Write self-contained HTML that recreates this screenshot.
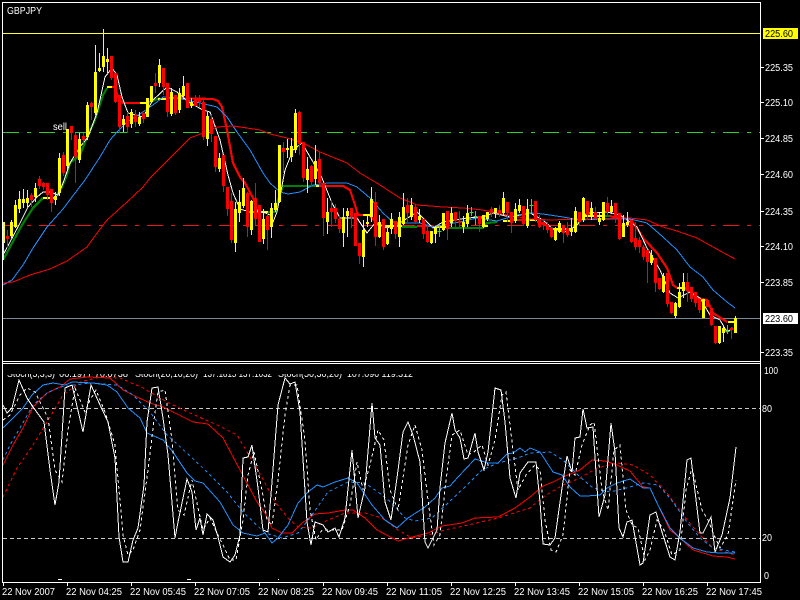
<!DOCTYPE html>
<html>
<head>
<meta charset="utf-8">
<title>GBPJPY</title>
<style>
html,body{margin:0;padding:0;background:#000;width:800px;height:600px;overflow:hidden}
svg{display:block}
text{font-family:"Liberation Sans",sans-serif;font-size:10px;fill:#fff}
.c{shape-rendering:crispEdges;fill:none}
</style>
</head>
<body>
<svg width="800" height="600" viewBox="0 0 800 600" xmlns="http://www.w3.org/2000/svg">
<defs><clipPath id="hd"><rect x="3" y="374" width="500" height="5"/></clipPath></defs>
<rect width="800" height="600" fill="#000"/>

<!-- horizontal levels -->
<path class="c" stroke="#ffff33" d="M3 33.5H760"/>
<path class="c" stroke="#32cd32" stroke-dasharray="16 8 4 8" d="M3 132.5H760"/>
<path class="c" stroke="#e81818" stroke-dasharray="16 8 4 8" d="M3 225.5H760"/>
<path class="c" stroke="#778899" d="M3 318.5H760"/>

<!-- thick MA -->
<g class="c" fill="none" stroke-width="2.2" stroke-linejoin="round">
<path stroke="#008000" d="M3 260L10 247L22 225L33 208L43 198M56 196L62 187L67 175L70 163L80 155L88 135L95 120L103 95L107 88M147 103L160 98M268 212H275L278 200L283 186H316M402 227H417M447 228H483L487 223L497 222M573 226L580 222M605 216H610"/>
<path stroke="#ff0" d="M43 198H55M107 87H112M140 103H148M158 99H166M257 210L260 212H268M316 186H320M363 215H370M385 226H402M433 227H447M483 226H488M503 221H510M530 220H537M552 229H572M585 216H605M677 288H685M728 322H736"/>
<path stroke="#f00" d="M112 87L115 87L118 97L123 103H140M166 98L213 99L218 101L222 107L227 130L233 163L240 177L245 183L253 198L257 210M320 186H343L350 190L355 205L358 215L363 215M370 216L378 224L385 226M417 226H433M510 220H527L530 220M537 222L550 226M610 216L613 217L630 219L637 228L643 238L657 253L667 268L673 285L677 288M685 288L697 298L707 300L713 313L727 322"/>
</g>

<!-- price MAs -->
<g class="c" fill="none" stroke-width="1">
<polyline stroke="#fff" points="3,255 10,242 20,223 28,207 37,197 43,192 50,192 58,195 63,183 70,163 80,147 88,137 97,113 105,77 112,68 117,75 122,97 128,113 143,117 153,100 167,87 177,92 190,103 203,110 210,112 220,140 228,175 233,193 240,209 250,212 263,212 270,215 273,222 277,212 285,170 293,150 302,143 313,162 322,178 332,203 340,218 357,218 367,233 375,223 387,228 400,223 417,212 427,222 433,228 443,222 467,218 483,217 493,213 510,217 530,213 543,220 553,229 567,232 577,225 587,213 607,212 620,215 637,227 647,248 660,270 670,293 678,298 690,292 700,298 710,315 720,320 727,332 733,328"/>
<polyline stroke="#1e90ff" points="3,285 12,280 23,265 33,248 47,227 63,209 72,197 85,180 100,157 110,140 117,132 127,122 143,112 157,102 163,97 177,98 200,103 217,107 227,117 237,132 250,150 263,173 270,183 280,192 288,194 300,192 313,185 328,183 347,183 357,187 370,198 383,213 393,222 407,223 420,223 432,227 443,225 460,222 477,218 497,221 517,215 530,213 543,214 563,217 580,220 603,219 630,219 647,223 663,237 677,250 690,267 703,277 713,290 727,302 735,308"/>
<polyline stroke="#f00" points="3,283 13,282 30,275 50,269 67,261 87,247 97,233 107,220 127,202 143,187 150,178 173,155 190,138 203,133 217,127 233,126 247,128 260,130 270,134 287,138 303,143 320,152 347,163 360,173 380,185 400,198 417,205 443,207 463,208 483,210 507,215 530,219 550,220 580,219 630,218 647,220 663,227 677,231 697,238 713,247 735,259"/>
</g>

<!-- wicks -->
<path class="c" stroke="#ff0" stroke-width="1" d="M3.5 222V260M11.5 220V238M15.5 200V228M19.5 191V213M23.5 189V208M27.5 190V207M35.5 183V202M55.5 192V205M59.5 153V196M67.5 129V170M79.5 133V163M87.5 102V140M95.5 45V115M99.5 53V72M103.5 29V72M107.5 48V73M123.5 115V132M131.5 109V128M139.5 112V126M147.5 98V117M151.5 86V103M159.5 59V87M171.5 88V116M179.5 88V113M183.5 76V99M191.5 98V108M207.5 112V146M219.5 153V172M235.5 202V252M239.5 190V222M243.5 178V208M251.5 200V235M263.5 209V244M271.5 203V238M275.5 190V212M279.5 145V203M287.5 139V158M291.5 138V162M295.5 109V153M307.5 157V193M315.5 145V185M327.5 198V234M343.5 208V247M347.5 208V237M363.5 220V267M367.5 215V227M371.5 187V222M379.5 215V238M387.5 228V245M391.5 213V234M399.5 212V247M403.5 193V225M411.5 198V220M419.5 209V223M431.5 231V244M435.5 226V243M443.5 213V231M451.5 207V227M463.5 216V233M467.5 205V227M483.5 215V228M487.5 212V221M495.5 208V218M503.5 192V216M515.5 203V223M519.5 199V213M527.5 199V228M555.5 227V241M559.5 221V233M571.5 218V236M575.5 207V233M583.5 197V222M591.5 202V220M599.5 213V225M603.5 202V221M611.5 200V214M623.5 215V237M627.5 212V227M651.5 250V265M663.5 273V293M675.5 302V318M679.5 283V308M683.5 273V298M703.5 299V318M719.5 326V344M723.5 325V342M735.5 316V333"/>
<path class="c" stroke="#f00" stroke-width="1" d="M7.5 230V248M31.5 193V207M39.5 176V189M43.5 182V190M47.5 183V200M51.5 189V212M63.5 152V176M71.5 126V140M75.5 133V183M83.5 133V143M91.5 102V120M111.5 56V80M115.5 73V103M119.5 95V133M127.5 112V133M135.5 110V127M143.5 113V123M155.5 73V93M163.5 68V95M167.5 83V117M175.5 95V115M187.5 83V108M195.5 95V107M199.5 95V107M203.5 98V140M211.5 115V142M215.5 136V172M223.5 155V192M227.5 187V216M231.5 193V243M247.5 192V237M255.5 183V225M259.5 205V242M267.5 213V250M283.5 142V173M299.5 111V155M303.5 142V182M311.5 165V187M319.5 152V187M323.5 183V236M331.5 200V227M335.5 204V223M339.5 216V233M351.5 208V228M355.5 213V246M359.5 243V264M375.5 192V246M383.5 219V250M395.5 221V239M407.5 198V223M415.5 205V224M423.5 219V239M427.5 223V243M447.5 211V240M455.5 212V228M459.5 211V228M479.5 216V232M491.5 207V217M499.5 205V217M507.5 202V222M511.5 212V233M523.5 206V226M535.5 201V222M539.5 215V228M543.5 220V230M547.5 222V233M551.5 227V238M563.5 225V243M567.5 222V237M579.5 212V225M587.5 201V220M595.5 207V220M607.5 197V215M615.5 203V223M619.5 213V240M631.5 220V243M635.5 222V250M639.5 237V253M643.5 245V260M647.5 250V283M655.5 258V292M659.5 278V290M667.5 273V307M671.5 302V314M687.5 273V302M691.5 287V302M695.5 292V307M699.5 299V313M707.5 300V307M711.5 308V326M715.5 326V344M731.5 327V339"/>
<path class="c" stroke="#2ee62e" stroke-width="1" d="M439.5 223V237M437.5 231.5H441.5M471.5 207V216M469.5 212.5H473.5M475.5 211V225M473.5 216.5H477.5M531.5 199V213M529.5 205.5H533.5M727.5 325V334M725.5 331.5H729.5"/>

<!-- bodies -->
<path class="c" stroke="#ff0" stroke-width="3" d="M3.5 222V243M11.5 222V236M15.5 205V227M19.5 199V209M23.5 199V203M27.5 198V203M35.5 188V197M55.5 196V200M59.5 158V193M67.5 129V166M79.5 139V160M87.5 105V137M95.5 72V113M99.5 68V71M103.5 56V67M107.5 59V62M123.5 119V125M131.5 112V124M139.5 117V124M147.5 98V117M151.5 86V102M159.5 65V83M171.5 92V114M179.5 93V110M183.5 86V96M191.5 102V106M207.5 116V139M219.5 158V169M235.5 209V243M239.5 202V213M243.5 188V206M251.5 201V230M263.5 219V239M271.5 208V227M275.5 203V210M279.5 145V202M287.5 148V150M291.5 146V157M295.5 113V150M307.5 169V180M315.5 161V179M327.5 212V222M343.5 217V233M347.5 211V216M363.5 230V257M367.5 222V224M371.5 199V217M379.5 222V237M387.5 232V244M391.5 219V229M399.5 217V237M403.5 207V224M411.5 205V217M419.5 216V220M431.5 231V243M435.5 228V234M443.5 213V230M451.5 213V223M463.5 222V227M467.5 213V224M483.5 215V227M487.5 212V219M495.5 208V213M503.5 198V213M515.5 209V221M519.5 205V211M527.5 209V226M555.5 228V240M559.5 223V232M571.5 228V232M575.5 211V232M583.5 198V220M591.5 208V215M599.5 218V222M603.5 202V220M611.5 206V212M623.5 223V237M627.5 222V225M651.5 255V263M663.5 276V292M675.5 303V316M679.5 292V307M683.5 282V291M703.5 299V318M719.5 326V343M723.5 328V333M735.5 318V333"/>
<path class="c" stroke="#f00" stroke-width="3" d="M7.5 236V239M31.5 195V200M39.5 179V186M43.5 183V187M47.5 183V195M51.5 189V203M63.5 155V173M71.5 126V133M75.5 135V157M83.5 136V140M91.5 103V107M111.5 56V78M115.5 73V102M119.5 95V127M127.5 116V127M135.5 115V122M143.5 113V119M155.5 83V86M163.5 68V87M167.5 83V112M175.5 95V113M187.5 83V108M195.5 98V106M199.5 99V102M203.5 102V137M211.5 119V134M215.5 136V167M223.5 155V186M227.5 187V209M231.5 201V240M247.5 193V227M255.5 198V219M259.5 205V242M267.5 216V230M283.5 148V152M299.5 112V144M303.5 142V178M311.5 166V182M319.5 159V183M323.5 183V218M331.5 208V212M335.5 208V219M339.5 219V229M351.5 208V217M355.5 213V246M359.5 243V256M375.5 202V237M383.5 219V247M395.5 221V234M407.5 205V213M415.5 207V222M423.5 219V234M427.5 231V242M447.5 211V229M455.5 212V221M459.5 221V223M479.5 216V224M491.5 209V213M499.5 210V213M507.5 202V213M511.5 212V223M523.5 206V224M535.5 201V220M539.5 220V227M543.5 222V225M547.5 225V230M551.5 228V237M563.5 225V233M567.5 228V235M579.5 212V222M587.5 201V215M595.5 212V219M607.5 203V212M615.5 203V218M619.5 213V239M631.5 220V242M635.5 238V247M639.5 240V247M643.5 247V257M647.5 250V262M655.5 258V283M659.5 278V289M667.5 273V304M671.5 302V313M687.5 282V291M691.5 287V299M695.5 292V303M699.5 299V310M707.5 300V307M711.5 308V325M715.5 326V343M731.5 328V330"/>

<text x="53" y="130" textLength="14" lengthAdjust="spacingAndGlyphs">sell</text>
<text x="7" y="14" textLength="35" lengthAdjust="spacingAndGlyphs">GBPJPY</text>

<!-- lower panel -->
<path class="c" stroke="#c8c8c8" stroke-dasharray="4 3" d="M3 408.5H760M3 538.5H760"/>
<g clip-path="url(#hd)" style="fill:#fff">
<text x="7" y="377" textLength="48" lengthAdjust="spacingAndGlyphs">Stoch(5,3,3)</text>
<text x="59" y="377" textLength="69" lengthAdjust="spacingAndGlyphs">66.1977 70.0738</text>
<text x="135" y="377" textLength="63" lengthAdjust="spacingAndGlyphs">Stoch(20,10,20)</text>
<text x="203" y="377" textLength="69" lengthAdjust="spacingAndGlyphs">137.1815 137.1032</text>
<text x="278" y="377" textLength="64" lengthAdjust="spacingAndGlyphs">Stoch(50,30,20)</text>
<text x="347" y="377" textLength="66" lengthAdjust="spacingAndGlyphs">107.096 119.312</text>
</g>

<g class="c" fill="none" stroke-width="1">
<polyline stroke="#f00" points="3,465 13,445 23,428 33,407 47,393 60,387 70,379 87,377 110,378 123,390 137,397 150,403 163,407 193,422 208,424 223,438 240,470 257,502 265,513 272,528 282,533 292,533 302,523 315,514 328,513 345,510 353,510 365,518 377,530 398,541 412,537 428,533 442,526 462,523 475,518 498,517 515,508 530,497 543,486 553,482 563,477 580,470 592,460 605,461 617,465 630,471 643,487 650,488 658,505 670,530 680,538 693,550 713,556 727,557 735,559"/>
<polyline stroke="#f00" stroke-dasharray="3 3" points="3,497 17,468 33,445 47,422 63,395 80,382 100,377 120,378 143,388 167,402 190,413 217,425 237,435 253,462 265,483 275,502 288,518 298,527 312,528 328,520 345,513 365,513 382,518 398,530 412,538 428,535 445,530 468,525 498,518 530,508 543,497 563,485 580,478 597,468 617,463 633,465 650,475 667,493 683,515 700,535 713,548 735,555"/>
<polyline stroke="#1e90ff" points="3,428 13,418 23,408 32,395 43,385 53,383 65,385 72,382 93,383 107,385 117,392 128,408 140,418 147,433 163,440 173,452 187,473 195,481 203,483 220,502 233,525 243,533 257,536 265,533 272,543 278,538 288,525 298,503 308,492 317,485 323,487 335,482 348,478 357,483 372,505 385,520 397,528 408,518 425,507 435,498 442,488 450,486 458,477 475,459 488,463 498,463 507,454 513,453 520,448 525,452 530,448 540,452 553,472 562,475 570,487 580,496 587,496 600,495 607,488 617,483 630,479 643,488 650,488 658,505 670,528 680,538 693,548 707,552 720,553 735,553"/>
<polyline stroke="#1e90ff" stroke-dasharray="3 3" points="3,460 10,445 20,428 33,405 47,393 60,387 90,383 117,385 133,395 150,412 167,435 187,453 207,472 227,492 243,512 265,533 282,538 298,533 312,515 328,492 348,482 365,483 378,492 392,503 405,518 415,521 432,518 448,503 465,487 482,470 498,463 518,458 530,453 550,452 563,460 580,477 593,488 610,492 630,487 643,483 658,485 670,498 687,522 700,538 713,548 735,552"/>
<polyline stroke="#fff" stroke-dasharray="3 3" points="3,420 10,415 20,395 27,388 35,392 48,418 55,470 62,482 68,430 75,388 85,412 90,400 96,390 105,412 115,445 123,535 128,555 133,550 140,530 148,470 154,420 158,392 165,390 172,440 178,510 184,515 192,480 198,508 203,530 210,518 218,535 223,545 230,560 236,560 243,520 248,475 254,452 262,490 267,520 272,525 278,480 285,415 290,385 297,385 305,440 310,510 316,540 322,530 332,530 342,530 350,505 357,462 363,490 370,465 378,430 384,440 390,490 398,510 408,445 415,425 422,450 428,500 434,545 440,535 446,480 452,435 460,430 468,455 474,452 482,445 488,465 495,440 502,395 506,392 513,450 518,490 526,475 535,465 540,470 545,520 551,550 556,552 563,535 570,470 575,475 582,445 590,425 594,422 602,490 608,510 614,450 620,445 626,510 632,525 638,528 645,560 650,550 657,520 664,530 672,555 680,550 686,490 692,468 702,510 708,520 714,535 720,548 728,535 736,480"/>
<polyline stroke="#fff" points="3,405 7,413 12,408 19,380 27,398 33,407 44,422 50,470 55,505 59,482 65,388 72,385 83,432 91,385 100,405 108,422 115,458 119,537 123,562 128,562 133,540 138,528 144,485 147,422 152,388 158,387 163,418 168,455 175,538 178,522 187,479 192,492 196,530 200,518 203,535 207,514 213,520 218,537 223,557 230,562 235,555 240,535 243,458 248,457 252,445 258,488 263,530 268,532 272,482 278,405 285,378 290,384 295,382 300,412 307,522 311,545 315,522 323,525 328,532 335,528 339,537 345,518 352,450 358,518 365,488 372,403 375,438 380,445 385,502 391,520 397,478 403,432 408,422 413,435 420,462 425,542 428,548 437,530 440,488 445,443 452,413 455,430 460,438 464,459 468,458 475,433 478,452 484,470 488,452 495,388 501,390 505,422 510,478 516,498 520,473 528,462 536,462 540,502 543,544 550,545 555,538 562,488 567,456 572,472 575,438 580,437 583,409 587,428 593,427 599,517 605,495 611,423 615,452 619,528 623,537 627,522 632,520 640,565 643,563 650,515 656,512 662,532 670,557 675,560 680,532 687,460 691,458 700,533 703,533 711,517 715,552 722,535 730,498 736,447"/>
</g>
<path class="c" stroke="#fff" d="M58 579.5H62M187 579.5H191M278 579.5H279"/>

<!-- frame -->
<path class="c" stroke="#fff" fill="none" d="M2.5 2V582.5M2 2.5H761M760.5 2V582.5M2 361.5H761M2 363.5H761M2 582.5H761"/>
<path class="c" stroke="#fff" d="M761 67.5H764M761 102.5H764M761 138.5H764M761 174.5H764M761 211.5H764M761 246.5H764M761 282.5H764M761 352.5H764M3.5 582V586M67.5 582V586M131.5 582V586M195.5 582V586M259.5 582V586M323.5 582V586M387.5 582V586M451.5 582V586M515.5 582V586M579.5 582V586M643.5 582V586M707.5 582V586"/>

<!-- price axis -->
<rect x="763" y="28" width="35" height="11" fill="#ff0"/>
<rect x="763" y="313" width="35" height="11" fill="#fff"/>
<g>
<text x="765" y="37" textLength="28" lengthAdjust="spacingAndGlyphs" style="fill:#000">225.60</text>
<text x="765" y="71" textLength="28" lengthAdjust="spacingAndGlyphs">225.35</text>
<text x="765" y="106" textLength="28" lengthAdjust="spacingAndGlyphs">225.10</text>
<text x="765" y="142" textLength="28" lengthAdjust="spacingAndGlyphs">224.85</text>
<text x="765" y="178" textLength="28" lengthAdjust="spacingAndGlyphs">224.60</text>
<text x="765" y="215" textLength="28" lengthAdjust="spacingAndGlyphs">224.35</text>
<text x="765" y="250" textLength="28" lengthAdjust="spacingAndGlyphs">224.10</text>
<text x="765" y="286" textLength="28" lengthAdjust="spacingAndGlyphs">223.85</text>
<text x="765" y="322" textLength="28" lengthAdjust="spacingAndGlyphs" style="fill:#000">223.60</text>
<text x="765" y="356" textLength="28" lengthAdjust="spacingAndGlyphs">223.35</text>
<text x="764" y="374" textLength="14" lengthAdjust="spacingAndGlyphs">100</text>
<text x="762" y="412" textLength="10" lengthAdjust="spacingAndGlyphs">80</text>
<text x="762" y="541" textLength="10" lengthAdjust="spacingAndGlyphs">20</text>
<text x="764" y="579" textLength="5" lengthAdjust="spacingAndGlyphs">0</text>
</g>

<!-- time axis -->
<g>
<text x="2" y="595" textLength="53" lengthAdjust="spacingAndGlyphs">22 Nov 2007</text>
<text x="66" y="595" textLength="56" lengthAdjust="spacingAndGlyphs">22 Nov 04:25</text>
<text x="130" y="595" textLength="56" lengthAdjust="spacingAndGlyphs">22 Nov 05:45</text>
<text x="194" y="595" textLength="56" lengthAdjust="spacingAndGlyphs">22 Nov 07:05</text>
<text x="258" y="595" textLength="56" lengthAdjust="spacingAndGlyphs">22 Nov 08:25</text>
<text x="322" y="595" textLength="56" lengthAdjust="spacingAndGlyphs">22 Nov 09:45</text>
<text x="386" y="595" textLength="56" lengthAdjust="spacingAndGlyphs">22 Nov 11:05</text>
<text x="450" y="595" textLength="56" lengthAdjust="spacingAndGlyphs">22 Nov 12:25</text>
<text x="514" y="595" textLength="56" lengthAdjust="spacingAndGlyphs">22 Nov 13:45</text>
<text x="578" y="595" textLength="56" lengthAdjust="spacingAndGlyphs">22 Nov 15:05</text>
<text x="642" y="595" textLength="56" lengthAdjust="spacingAndGlyphs">22 Nov 16:25</text>
<text x="706" y="595" textLength="56" lengthAdjust="spacingAndGlyphs">22 Nov 17:45</text>
</g>
</svg>
</body>
</html>
